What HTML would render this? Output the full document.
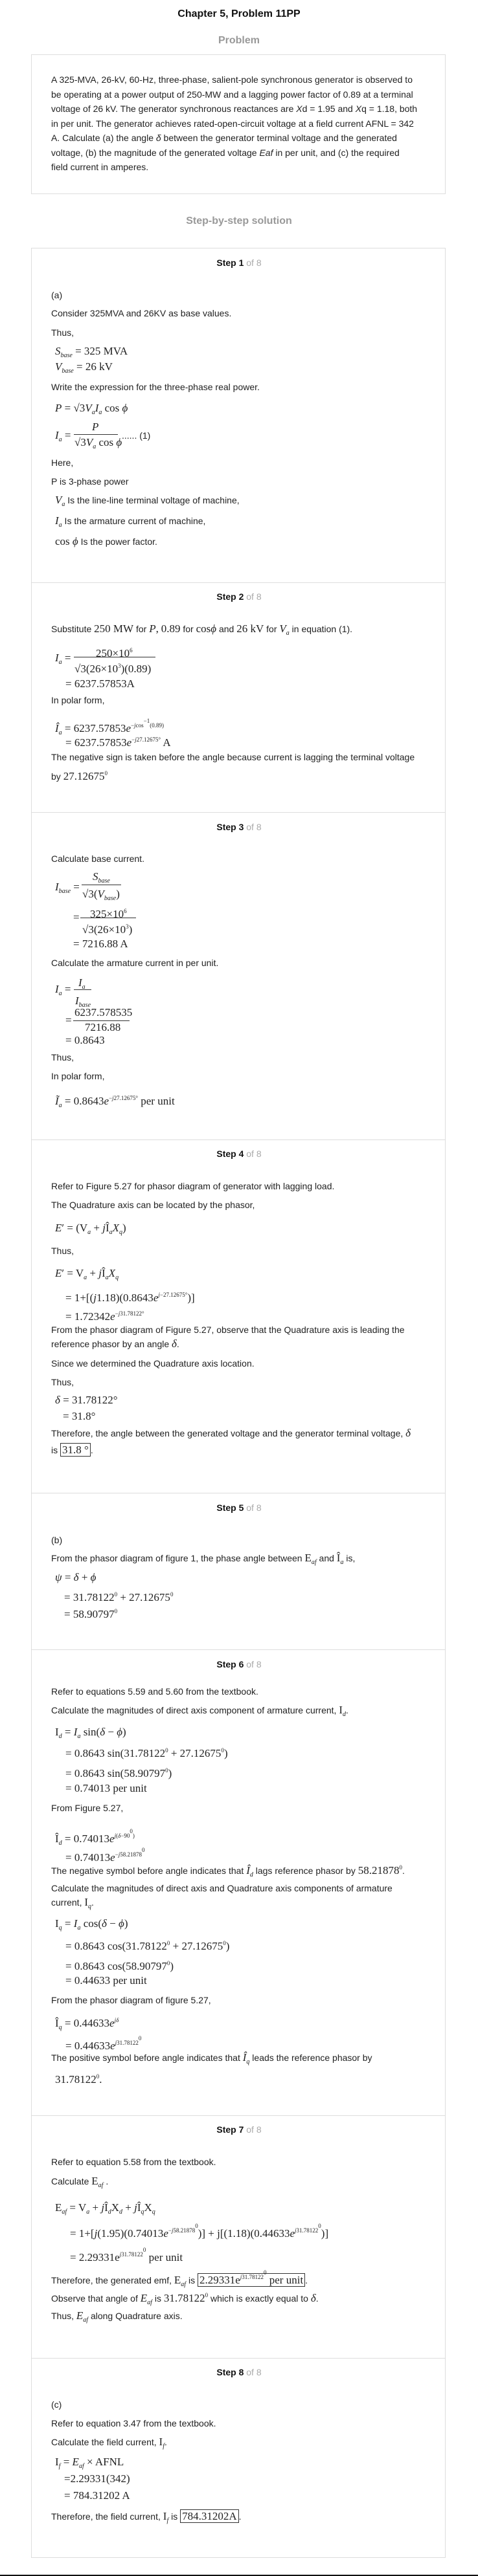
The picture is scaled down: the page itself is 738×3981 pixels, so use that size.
<!DOCTYPE html>
<html><head><meta charset="utf-8">
<style>
*{margin:0;padding:0;box-sizing:border-box}
html,body{width:738px;height:3981px;background:#fff;overflow:hidden}
body{position:relative;font-family:"Liberation Sans",Arial,sans-serif;color:#222;font-size:14px}
.a{position:absolute;white-space:nowrap;line-height:18px}
.t{left:79px}
.m{font-family:"Liberation Serif",serif;font-size:17px;color:#222}
.c{left:0;width:738px;text-align:center}
.h{font-weight:bold;font-size:16px;color:#999}
.st{font-weight:bold;font-size:14px;color:#111}
.st span{font-weight:normal;color:#aaa}
.box{position:absolute;left:48px;width:640px;border:1px solid #ddd}
.sep{position:absolute;left:48px;width:640px;height:1px;background:#ddd}
i{font-style:italic}
sub{font-size:10px;font-style:italic;vertical-align:-4px}
sup{font-size:9px;vertical-align:7px}
.fl{position:absolute;height:1px;background:#333}
.bx{border:1px solid #333;padding:0 2px}
</style></head><body>

<div class="a c" style="top:13px;font-weight:bold;font-size:16px;color:#111">Chapter 5, Problem 11PP</div>
<div class="a c h" style="top:54px">Problem</div>
<div class="box" style="top:84px;height:216px"></div>
<div class="a t" style="top:112px;line-height:22.5px;font-size:14px">A 325-MVA, 26-kV, 60-Hz, three-phase, salient-pole synchronous generator is observed to<br>be operating at a power output of 250-MW and a lagging power factor of 0.89 at a terminal<br>voltage of 26 kV. The generator synchronous reactances are <i>X</i>d = 1.95 and <i>X</i>q = 1.18, both<br>in per unit. The generator achieves rated-open-circuit voltage at a field current AFNL = 342<br>A. Calculate (a) the angle <i>δ</i> between the generator terminal voltage and the generated<br>voltage, (b) the magnitude of the generated voltage <i>Eaf</i> in per unit, and (c) the required<br>field current in amperes.</div>
<div class="a c h" style="top:333px">Step-by-step solution</div>

<div class="box" style="top:383px;height:3570px"></div>
<div class="sep" style="top:900px"></div>
<div class="sep" style="top:1255px"></div>
<div class="sep" style="top:1761px"></div>
<div class="sep" style="top:2307px"></div>
<div class="sep" style="top:2549px"></div>
<div class="sep" style="top:3269px"></div>
<div class="sep" style="top:3644px"></div>

<div class="a c st" style="top:397px">Step 1 <span>of 8</span></div>
<div class="a c st" style="top:913px">Step 2 <span>of 8</span></div>
<div class="a c st" style="top:1269px">Step 3 <span>of 8</span></div>
<div class="a c st" style="top:1774px">Step 4 <span>of 8</span></div>
<div class="a c st" style="top:2321px">Step 5 <span>of 8</span></div>
<div class="a c st" style="top:2563px">Step 6 <span>of 8</span></div>
<div class="a c st" style="top:3282px">Step 7 <span>of 8</span></div>
<div class="a c st" style="top:3657px">Step 8 <span>of 8</span></div>

<!-- Step 1 -->
<div class="a t" style="top:447px">(a)</div>
<div class="a t" style="top:475px">Consider 325MVA and 26KV as base values.</div>
<div class="a t" style="top:505px">Thus,</div>
<div class="a m" style="left:85px;top:534px"><i>S</i><sub>base</sub> = 325 MVA</div>
<div class="a m" style="left:85px;top:558px"><i>V</i><sub>base</sub> = 26 kV</div>
<div class="a t" style="top:589px">Write the expression for the three-phase real power.</div>
<div class="a m" style="left:85px;top:622px"><i>P</i> = √3<i>V</i><sub>a</sub><i>I</i><sub>a</sub> cos <i>ϕ</i></div>
<div class="a m" style="left:85px;top:664px"><i>I</i><sub>a</sub> =</div>
<div class="a m" style="left:142px;top:651px"><i>P</i></div>
<div class="fl" style="left:114px;top:671px;width:68px"></div>
<div class="a m" style="left:115px;top:675px">√3<i>V</i><sub>a</sub> cos <i>ϕ</i></div>
<div class="a t" style="left:188px;top:664px">...... (1)</div>
<div class="a t" style="top:706px">Here,</div>
<div class="a t" style="top:735px">P is 3-phase power</div>
<div class="a t" style="left:85px;top:764px"><span class="m"><i>V</i><sub>a</sub></span> Is the line-line terminal voltage of machine,</div>
<div class="a t" style="left:85px;top:796px"><span class="m"><i>I</i><sub>a</sub></span> Is the armature current of machine,</div>
<div class="a t" style="left:85px;top:828px"><span class="m">cos <i>ϕ</i></span> Is the power factor.</div>

<!-- Step 2 -->
<div class="a t" style="top:963px">Substitute <span class="m">250 MW</span> for <span class="m"><i>P</i>,</span> <span class="m">0.89</span> for <span class="m">cos<i>ϕ</i></span> and <span class="m">26 kV</span> for <span class="m"><i>V</i><sub>a</sub></span> in equation (1).</div>
<div class="a m" style="left:85px;top:1008px"><i>I</i><sub>a</sub> =</div>
<div class="a m" style="left:148px;top:996px">250×10<sup>6</sup></div>
<div class="fl" style="left:114px;top:1015px;width:126px"></div>
<div class="a m" style="left:115px;top:1020px">√3(26×10<sup>3</sup>)(0.89)</div>
<div class="a m" style="left:101px;top:1048px">= 6237.57853A</div>
<div class="a t" style="top:1073px">In polar form,</div>
<div class="a m" style="left:85px;top:1105px"><i>Î</i><sub>a</sub> = 6237.57853<i>e</i><sup>−<i>j</i>cos<sup>−1</sup>(0.89)</sup></div>
<div class="a m" style="left:101px;top:1134px">= 6237.57853<i>e</i><sup>−<i>j</i>27.12675°</sup> A</div>
<div class="a t" style="top:1161px">The negative sign is taken before the angle because current is lagging the terminal voltage</div>
<div class="a t" style="top:1186px">by <span class="m">27.12675<sup>0</sup></span></div>

<!-- Step 3 -->
<div class="a t" style="top:1318px">Calculate base current.</div>
<div class="a m" style="left:85px;top:1362px"><i>I</i><sub>base</sub> =</div>
<div class="a m" style="left:143px;top:1346px"><i>S</i><sub>base</sub></div>
<div class="fl" style="left:126px;top:1367px;width:61px"></div>
<div class="a m" style="left:127px;top:1373px">√3(<i>V</i><sub>base</sub>)</div>
<div class="a m" style="left:113px;top:1409px">=</div>
<div class="a m" style="left:139px;top:1399px">325×10<sup>6</sup></div>
<div class="fl" style="left:124px;top:1418px;width:86px"></div>
<div class="a m" style="left:127px;top:1423px">√3(26×10<sup>3</sup>)</div>
<div class="a m" style="left:113px;top:1450px">= 7216.88 A</div>
<div class="a t" style="top:1479px">Calculate the armature current in per unit.</div>
<div class="a m" style="left:85px;top:1520px"><i>I</i><sub>a</sub> =</div>
<div class="a m" style="left:121px;top:1510px"><i>I</i><sub>a</sub></div>
<div class="fl" style="left:114px;top:1529px;width:27px"></div>
<div class="a m" style="left:116px;top:1538px"><i>I</i><sub>base</sub></div>
<div class="a m" style="left:101px;top:1568px">=</div>
<div class="a m" style="left:115px;top:1556px">6237.578535</div>
<div class="fl" style="left:113px;top:1577px;width:87px"></div>
<div class="a m" style="left:131px;top:1579px">7216.88</div>
<div class="a m" style="left:101px;top:1599px">= 0.8643</div>
<div class="a t" style="top:1625px">Thus,</div>
<div class="a t" style="top:1654px">In polar form,</div>
<div class="a m" style="left:85px;top:1688px"><i>Ĩ</i><sub>a</sub> = 0.8643<i>e</i><sup>−<i>j</i>27.12675°</sup> per unit</div>

<!-- Step 4 -->
<div class="a t" style="top:1824px">Refer to Figure 5.27 for phasor diagram of generator with lagging load.</div>
<div class="a t" style="top:1853px">The Quadrature axis can be located by the phasor,</div>
<div class="a m" style="left:85px;top:1889px"><i>E</i>′ = (V<sub>a</sub> + <i>j</i>Î<sub>a</sub><i>X</i><sub>q</sub>)</div>
<div class="a t" style="top:1924px">Thus,</div>
<div class="a m" style="left:85px;top:1959px"><i>E</i>′ = V<sub>a</sub> + <i>j</i>Î<sub>a</sub><i>X</i><sub>q</sub></div>
<div class="a m" style="left:101px;top:1992px">= 1+[(<i>j</i>1.18)(0.8643<i>e</i><sup><i>j</i>−27.12675°</sup>)]</div>
<div class="a m" style="left:101px;top:2021px">= 1.72342<i>e</i><sup>−<i>j</i>31.78122°</sup></div>
<div class="a t" style="top:2046px">From the phasor diagram of Figure 5.27, observe that the Quadrature axis is leading the</div>
<div class="a t" style="top:2068px">reference phasor by an angle <span class="m"><i>δ</i></span>.</div>
<div class="a t" style="top:2098px">Since we determined the Quadrature axis location.</div>
<div class="a t" style="top:2127px">Thus,</div>
<div class="a m" style="left:85px;top:2155px"><i>δ</i> = 31.78122°</div>
<div class="a m" style="left:97px;top:2180px">= 31.8°</div>
<div class="a t" style="top:2206px">Therefore, the angle between the generated voltage and the generator terminal voltage, <span class="m"><i>δ</i></span></div>
<div class="a t" style="top:2232px">is <span class="m bx">31.8 °</span>.</div>

<!-- Step 5 -->
<div class="a t" style="top:2371px">(b)</div>
<div class="a t" style="top:2399px">From the phasor diagram of figure 1, the phase angle between <span class="m">E<sub>af</sub></span> and <span class="m">Î<sub>a</sub></span> is,</div>
<div class="a m" style="left:85px;top:2429px"><i>ψ</i> = <i>δ</i> + <i>ϕ</i></div>
<div class="a m" style="left:99px;top:2455px">= 31.78122<sup>0</sup> + 27.12675<sup>0</sup></div>
<div class="a m" style="left:99px;top:2481px">= 58.90797<sup>0</sup></div>

<!-- Step 6 -->
<div class="a t" style="top:2605px">Refer to equations 5.59 and 5.60 from the textbook.</div>
<div class="a t" style="top:2634px">Calculate the magnitudes of direct axis component of armature current, <span class="m">I<sub>d</sub></span>.</div>
<div class="a m" style="left:85px;top:2668px">I<sub>d</sub> = <i>I</i><sub>a</sub> sin(<i>δ</i> − <i>ϕ</i>)</div>
<div class="a m" style="left:101px;top:2696px">= 0.8643 sin(31.78122<sup>0</sup> + 27.12675<sup>0</sup>)</div>
<div class="a m" style="left:101px;top:2727px">= 0.8643 sin(58.90797<sup>0</sup>)</div>
<div class="a m" style="left:101px;top:2755px">= 0.74013 per unit</div>
<div class="a t" style="top:2785px">From Figure 5.27,</div>
<div class="a m" style="left:85px;top:2821px">Î<sub>d</sub> = 0.74013<i>e</i><sup><i>j</i>(<i>δ</i>−90<sup>0</sup>)</sup></div>
<div class="a m" style="left:101px;top:2850px">= 0.74013<i>e</i><sup>−<i>j</i>58.21878<sup>0</sup></sup></div>
<div class="a t" style="top:2877px">The negative symbol before angle indicates that <span class="m"><i>Î</i><sub>d</sub></span> lags reference phasor by <span class="m">58.21878<sup>0</sup></span>.</div>
<div class="a t" style="top:2909px">Calculate the magnitudes of direct axis and Quadrature axis components of armature</div>
<div class="a t" style="top:2931px">current, <span class="m">I<sub>q</sub></span>.</div>
<div class="a m" style="left:85px;top:2964px">I<sub>q</sub> = <i>I</i><sub>a</sub> cos(<i>δ</i> − <i>ϕ</i>)</div>
<div class="a m" style="left:101px;top:2994px">= 0.8643 cos(31.78122<sup>0</sup> + 27.12675<sup>0</sup>)</div>
<div class="a m" style="left:101px;top:3025px">= 0.8643 cos(58.90797<sup>0</sup>)</div>
<div class="a m" style="left:101px;top:3052px">= 0.44633 per unit</div>
<div class="a t" style="top:3082px">From the phasor diagram of figure 5.27,</div>
<div class="a m" style="left:85px;top:3113px">Î<sub>q</sub> = 0.44633<i>e</i><sup><i>jδ</i></sup></div>
<div class="a m" style="left:101px;top:3141px">= 0.44633<i>e</i><sup><i>j</i>31.78122<sup>0</sup></sup></div>
<div class="a t" style="top:3171px">The positive symbol before angle indicates that <span class="m"><i>Î</i><sub>q</sub></span> leads the reference phasor by</div>
<div class="a m" style="left:85px;top:3200px">31.78122<sup>0</sup>.</div>

<!-- Step 7 -->
<div class="a t" style="top:3332px">Refer to equation 5.58 from the textbook.</div>
<div class="a t" style="top:3362px">Calculate <span class="m">E<sub>af</sub></span> .</div>
<div class="a m" style="left:85px;top:3403px">E<sub>af</sub> = V<sub>a</sub> + <i>j</i>Î<sub>d</sub>X<sub>d</sub> + <i>j</i>Î<sub>q</sub>X<sub>q</sub></div>
<div class="a m" style="left:108px;top:3431px">= 1+[<i>j</i>(1.95)(0.74013<i>e</i><sup>−<i>j</i>58.21878<sup>0</sup></sup>)] + j[(1.18)(0.44633<i>e</i><sup><i>j</i>31.78122<sup>0</sup></sup>)]</div>
<div class="a m" style="left:108px;top:3468px">= 2.29331e<sup><i>j</i>31.78122<sup>0</sup></sup> per unit</div>
<div class="a t" style="top:3503px">Therefore, the generated emf, <span class="m">E<sub>af</sub></span> is <span class="m bx">2.29331e<sup><i>j</i>31.78122<sup>0</sup></sup> per unit</span>.</div>
<div class="a t" style="top:3538px">Observe that angle of <span class="m"><i>E</i><sub>af</sub></span> is <span class="m">31.78122<sup>0</sup></span> which is exactly equal to <span class="m"><i>δ</i></span>.</div>
<div class="a t" style="top:3570px">Thus, <span class="m"><i>E</i><sub>af</sub></span> along Quadrature axis.</div>

<!-- Step 8 -->
<div class="a t" style="top:3707px">(c)</div>
<div class="a t" style="top:3736px">Refer to equation 3.47 from the textbook.</div>
<div class="a t" style="top:3765px">Calculate the field current, <span class="m">I<sub>f</sub></span>.</div>
<div class="a m" style="left:85px;top:3796px">I<sub>f</sub> = <i>E</i><sub>af</sub> × AFNL</div>
<div class="a m" style="left:99px;top:3822px">=2.29331(342)</div>
<div class="a m" style="left:99px;top:3848px">= 784.31202 A</div>
<div class="a t" style="top:3880px">Therefore, the field current, <span class="m">I<sub>f</sub></span> is <span class="m bx">784.31202A</span>.</div>

<div style="position:absolute;left:0;top:3979px;width:738px;height:2px;background:#111"></div>
</body></html>
